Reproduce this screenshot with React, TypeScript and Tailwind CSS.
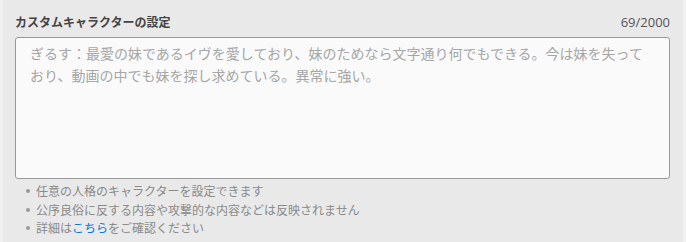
const notes = [
  { id: "any", body: <>任意の人格のキャラクターを設定できます</> },
  { id: "rule", body: <>公序良俗に反する内容や攻撃的な内容などは反映されません</> },
  {
    id: "more",
    body: (
      <>
        詳細は<a href="#" className="text-[#0a74e0]">こちら</a>をご確認ください
      </>
    ),
  },
];

export default function App() {
  const text =
    "ぎるす：最愛の妹であるイヴを愛しており、妹のためなら文字通り何でもできる。今は妹を失っており、動画の中でも妹を探し求めている。異常に強い。";

  return (
    <div className="h-[242px] w-[686px] bg-[#f1f1f1] px-[3px] font-['Noto_Sans_CJK_JP','Noto_Sans',sans-serif]">
      <div className="flex h-full flex-col bg-[#e9e9e9] pl-[12px] pr-[13px] pt-[13px]">
        <div className="flex items-end justify-between leading-[18px]">
          <span className="text-[12px] font-bold text-[#444]">カスタムキャラクターの設定</span>
          <span className="font-['Open_Sans',sans-serif] text-[13px] text-[#555]">{text.length}/2000</span>
        </div>
        <textarea
          className="mt-[6px] h-[142px] w-full resize-none rounded-[3px] border border-[#999] bg-[#fafafa] px-[14px] py-[4px] text-[14px] leading-[22px] text-[#555] outline-none placeholder:text-[#a6a6a6]"
          placeholder={text}
        />
        <ul className="mt-[3px] pl-[11px] text-[12px] leading-[18.5px] text-[#8a8a8a]">
          {notes.map((n) => (
            <li key={n.id} className="flex items-center gap-[6px]">
              <span className="h-[4px] w-[4px] rounded-full bg-[#999]" />
              <span>{n.body}</span>
            </li>
          ))}
        </ul>
      </div>
    </div>
  );
}
